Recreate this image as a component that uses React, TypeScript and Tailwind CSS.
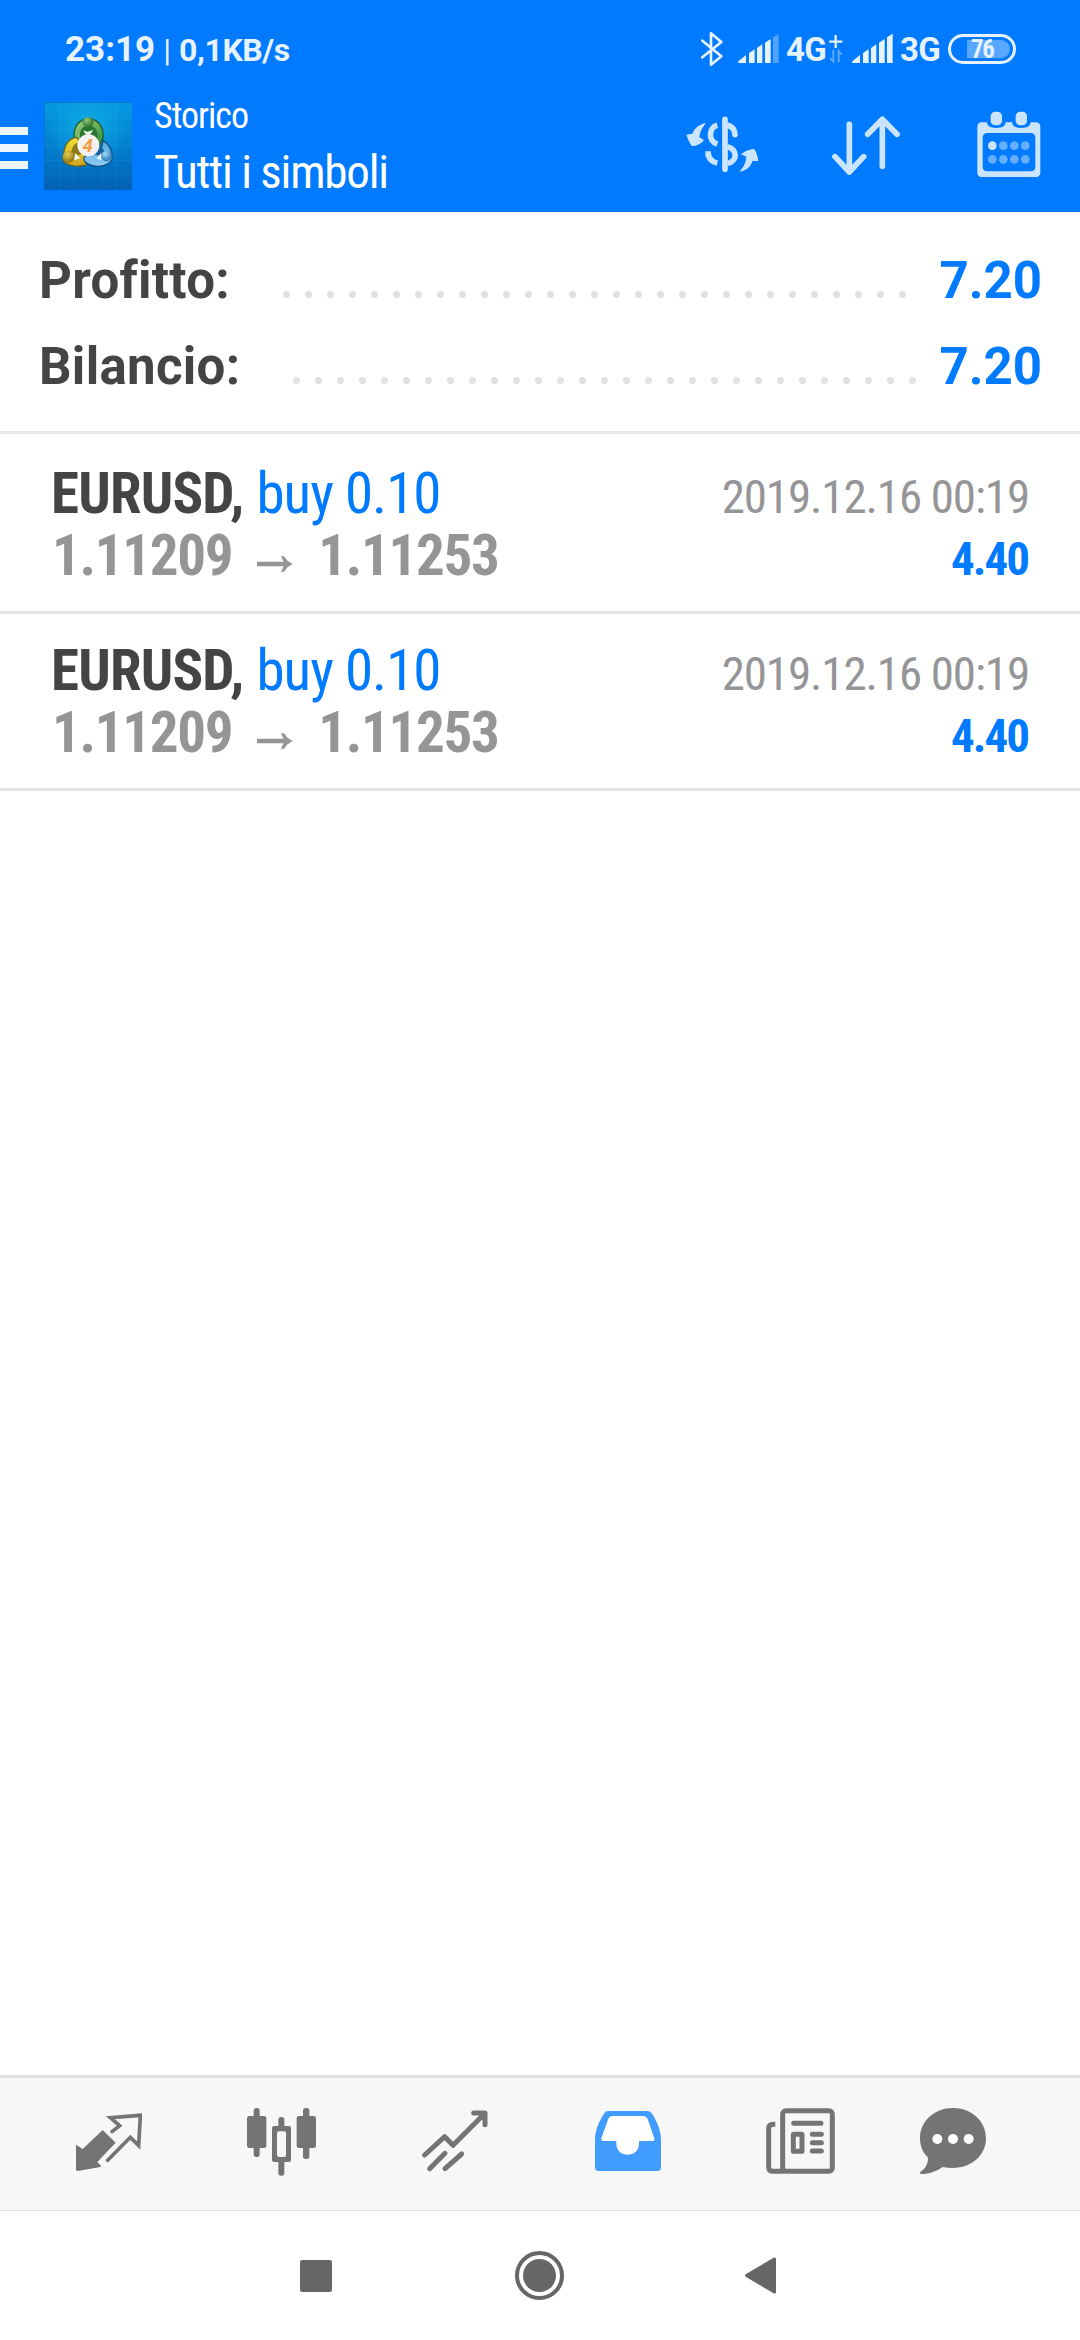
type Deal = {
  symbol: string;
  side: string;
  open: string;
  close: string;
  time: string;
  profit: string;
};

const deals: Deal[] = [
  { symbol: "EURUSD,", side: "buy 0.10", open: "1.11209", close: "1.11253", time: "2019.12.16 00:19", profit: "4.40" },
  { symbol: "EURUSD,", side: "buy 0.10", open: "1.11209", close: "1.11253", time: "2019.12.16 00:19", profit: "4.40" },
];

const totals = [
  { label: "Profitto:", value: "7.20" },
  { label: "Bilancio:", value: "7.20" },
];

function Signal({ weak }: { weak?: boolean }) {
  return (
    <svg className="h-[100px] w-[41px]" viewBox="233 0 123 300" fill="#e6f2ff">
      <path d="M234 189V184L257 165V189Z" />
      <path d="M266 189V159L283 148V189Z" />
      <path d="M290 189V144L306 133V189Z" />
      <path d="M314 189V128L331 117V189Z" />
      <path d="M338 189V112L355 101V189Z" opacity={weak ? 0.35 : 1} />
    </svg>
  );
}

function StatusBar() {
  return (
    <div className="flex h-[100px] items-center pr-16 pl-[65px] text-[#e6f2ff]">
      <div className="flex items-baseline font-bold">
        <span className="text-[35px] leading-[40px]">23:19</span>
        <span className="ml-[8px] text-[32px] leading-[40px] font-normal">|</span>
        <span className="ml-[8px] text-[32px] leading-[40px] tracking-[-0.4px]">0,1KB/s</span>
      </div>
      <div className="ml-auto flex items-center">
        <svg className="h-[100px] w-[22px]" viewBox="122 0 66 300" fill="none" stroke="#e6f2ff" strokeWidth="8" strokeLinejoin="round" strokeLinecap="round">
          <path d="M126 122L183 169L152 194V100L183 126L126 172" />
        </svg>
        <div className="ml-[15px]">
          <Signal weak />
        </div>
        <span className="ml-[7px] w-[43px] text-[33px] leading-[96px] font-bold tracking-[-0.8px]">4G</span>
        <svg className="h-[100px] w-[14px]" viewBox="507 0 42 300" fill="none" stroke="#e6f2ff">
          <path d="M508 125H547M527 105V144" strokeWidth="7" />
          <path d="M520 149V184L510 174M536 187V153L545 164" strokeWidth="6" opacity=".4" />
        </svg>
        <div className="ml-[9px]">
          <Signal />
        </div>
        <span className="ml-[7px] w-[48px] text-[33px] leading-[96px] font-bold tracking-[-0.8px]">3G</span>
        <div className="relative mb-[2px] h-[30px] w-[68px] rounded-full border-[3px] border-[#e6f2ff]">
          <div className="absolute top-[3px] right-[3px] h-[18px] w-[43px] rounded-r-full bg-white/35" />
          <span className="absolute top-px left-[20px] font-['Roboto_Condensed',sans-serif] text-[25px] leading-[24px] font-bold tracking-[-1.5px]">76</span>
        </div>
      </div>
    </div>
  );
}

function Logo() {
  return (
    <svg className="mt-[2px] ml-4 size-[88px]" viewBox="42 37 264 264">
      <defs>
        <linearGradient id="sky" x1="0" y1="0" x2="0" y2="1">
          <stop offset="0" stopColor="#0599e2" />
          <stop offset=".5" stopColor="#027fd0" />
          <stop offset="1" stopColor="#0161b2" />
        </linearGradient>
        <radialGradient id="glow" cx=".5" cy=".3" r=".45">
          <stop offset="0" stopColor="#12b5e6" stopOpacity=".75" />
          <stop offset="1" stopColor="#12b5e6" stopOpacity="0" />
        </radialGradient>
        <linearGradient id="green" x1="0" y1="0" x2="1" y2="1">
          <stop offset="0" stopColor="#a3d080" />
          <stop offset="1" stopColor="#2f8b34" />
        </linearGradient>
        <linearGradient id="yellow" x1="0" y1="0" x2="0" y2="1">
          <stop offset="0" stopColor="#f3df35" />
          <stop offset="1" stopColor="#cfa420" />
        </linearGradient>
        <linearGradient id="blue" x1="0" y1="0" x2="0" y2="1">
          <stop offset="0" stopColor="#4fa6de" />
          <stop offset="1" stopColor="#8dcbf0" />
        </linearGradient>
        <radialGradient id="ballGreen" cx=".4" cy=".3" r=".7">
          <stop offset="0" stopColor="#8fc978" />
          <stop offset="1" stopColor="#286b2a" />
        </radialGradient>
        <radialGradient id="ballYellow" cx=".4" cy=".3" r=".7">
          <stop offset="0" stopColor="#e6cf4a" />
          <stop offset="1" stopColor="#927316" />
        </radialGradient>
        <radialGradient id="ballBlue" cx=".4" cy=".3" r=".7">
          <stop offset="0" stopColor="#a4dcf6" />
          <stop offset="1" stopColor="#2279b4" />
        </radialGradient>
      </defs>
      <rect x="42" y="37" width="264" height="264" fill="url(#sky)" />
      <rect x="42" y="37" width="264" height="264" fill="url(#glow)" />
      <path d="M90 37V301M132 37V301M174 37V301M216 37V301M258 37V301M42 80H306M42 124H306M42 168H306M42 212H306M42 256H306" stroke="#4fc0ee" strokeOpacity=".2" strokeWidth="2" />
      <path d="M43 37V301M42 38H306" stroke="#0562b4" strokeWidth="2" />
      <path d="M133 150C128 112 146 88 176 88C206 88 222 112 219 146L206 172L148 160Z" fill="url(#green)" stroke="#1d5d2d" strokeWidth="4" />
      <path d="M140 143C112 146 100 170 99 212C112 228 138 234 168 226L178 196Z" fill="url(#yellow)" stroke="#6c6320" strokeWidth="4" />
      <path d="M219 152C240 164 248 184 246 210C232 232 196 238 166 218C158 208 162 198 172 196L212 186Z" fill="url(#blue)" stroke="#104f86" strokeWidth="4" />
      <path d="M150 146C148 118 158 108 176 108C194 108 206 120 203 148Z" fill="#2a7434" />
      <path d="M122 206C122 180 130 162 146 158L156 192Z" fill="#8a7a1c" />
      <path d="M226 204C226 186 220 176 210 170L192 194Z" fill="#1c64a0" />
      <path d="M159 122L173 126L190 121L180 135H168Z" fill="#eaf6df" />
      <path d="M136 190L150 206L131 212ZM214 190L199 206L214 212Z" fill="#eef8ff" />
      <circle cx="174" cy="98" r="16" fill="url(#ballGreen)" />
      <circle cx="116" cy="201" r="18" fill="url(#ballYellow)" />
      <circle cx="229" cy="199" r="16" fill="url(#ballBlue)" />
      <circle cx="175" cy="167" r="33" fill="#f5f1f3" />
      <text x="173" y="187" textAnchor="middle" fontFamily="Roboto, sans-serif" fontStyle="italic" fontWeight="700" fontSize="56" fill="#f0a046">4</text>
    </svg>
  );
}

function Toolbar() {
  return (
    <div className="flex h-28 items-start pr-[39px]">
      <div className="mt-[27px] flex w-7 flex-col gap-[9px]">
        <div className="h-2 bg-[#ebf6ff]" />
        <div className="h-2 bg-[#ebf6ff]" />
        <div className="h-2 bg-[#ebf6ff]" />
      </div>
      <Logo />
      <div className="ml-[22px] flex flex-col font-['Roboto_Condensed',sans-serif] text-white">
        <span className="text-[36px] leading-[32px] tracking-[-1px]">Storico</span>
        <span className="text-[47px] leading-[80px] tracking-[-1.2px]">Tutti i simboli</span>
      </div>
      <div className="ml-auto flex text-[#cce5ff]">
        <svg className="h-28 w-[73px]" viewBox="77 300 219 336" fill="currentColor">
          <path d="M137 369C116 373 103 384 96 401L78 404C82 416 88 429 94 438C107 438 122 433 131 420L117 412C118 396 125 383 137 369Z" />
          <path d="M237 515C258 511 269 503 277 482L294 484C293 469 288 456 281 446C268 449 253 452 242 463L258 470C257 488 250 501 237 515Z" />
          <g fill="none" stroke="currentColor" strokeWidth="17">
            <path d="M194 358V508" strokeLinecap="round" />
            <path d="M171 376C145 382 142 423 171 432" />
            <path d="M135 462H144C146 478 155 486 171 489" />
            <path d="M202 376C217 380 223 389 224 404" strokeLinecap="round" />
            <path d="M202 440C232 448 232 483 202 490" />
          </g>
        </svg>
        <svg className="ml-[73px] h-28 w-[68px]" viewBox="514 300 204 336" fill="none" stroke="currentColor" strokeWidth="17" strokeLinecap="round" strokeLinejoin="round">
          <path d="M566 373V516M523 470L566 516L609 470" />
          <path d="M665 499V358M621 403L665 358L709 403" />
        </svg>
        <svg className="ml-[77px] h-28 w-[64px]" viewBox="950 300 192 336" fill="currentColor">
          <path fillRule="evenodd" d="M963 367H980C981 379 990 384 1008 384C1026 384 1035 379 1036 367H1055C1056 379 1065 384 1083 384C1101 384 1110 379 1111 367H1128C1135 367 1140 372 1140 379V519C1140 526 1135 531 1128 531H963C956 531 951 526 951 519V379C951 372 956 367 963 367ZM981 399C972 399 967 404 967 413V500C967 509 972 514 981 514H1111C1120 514 1125 509 1125 500V413C1125 404 1120 399 1111 399Z" />
          <rect x="991" y="335" width="34" height="41" rx="14" />
          <rect x="1066" y="335" width="34" height="41" rx="14" />
          <circle cx="996" cy="437" r="13" />
          <g opacity=".5">
            <circle cx="1029" cy="437" r="13" />
            <circle cx="1062" cy="437" r="13" />
            <circle cx="1095" cy="437" r="13" />
            <circle cx="996" cy="478" r="13" />
            <circle cx="1029" cy="478" r="13" />
            <circle cx="1062" cy="478" r="13" />
            <circle cx="1095" cy="478" r="13" />
          </g>
        </svg>
      </div>
    </div>
  );
}

function Summary() {
  return (
    <section className="mb-[3px] border-b-[3px] border-[#e5e5e5] pt-[26px] pr-[38px] pb-[21px] pl-[39px] text-[51px] leading-[86px] font-bold">
      {totals.map((row) => (
        <div key={row.label} className="flex">
          <span className="tracking-[0.3px] text-[#444444]">{row.label}</span>
          <div className="mt-[53px] ml-[53px] flex gap-[15px]">
            {Array.from({ length: 29 }, (_, i) => (
              <span key={i} className="size-[7px] rounded-full bg-[#e1e1e1]" />
            ))}
          </div>
          <span className="ml-auto text-[#007aff]">{row.value}</span>
        </div>
      ))}
    </section>
  );
}

function DealRow({ deal }: { deal: Deal }) {
  return (
    <li className="flex h-[177px] justify-between border-b-[3px] border-[#e5e5e5] pr-[51px] pl-[51px] font-['Roboto_Condensed',sans-serif] leading-[62px]">
      <div className="pt-[26px] text-[57px]">
        <div className="flex">
          <span className="font-bold tracking-[-0.8px] text-[#444444]">{deal.symbol}</span>
          <span className="ml-[13px] tracking-[-1px] text-[#007aff]">{deal.side}</span>
        </div>
        <div className="flex pl-px font-bold tracking-[-1.3px] text-[#959598]">
          <span>{deal.open}</span>
          <svg className="ml-[25px] h-[62px] w-[37px]" viewBox="0 0 37 62" fill="none" stroke="currentColor" strokeWidth="4.500">
            <path d="M0 39H33" />
            <path d="M24 31L27.500 31.500C30 36 32 37.500 36.500 39C32 40.500 30 42 27.500 46.500L24 47L27.500 39Z" fill="currentColor" stroke="none" />
          </svg>
          <span className="ml-[24px]">{deal.close}</span>
        </div>
      </div>
      <div className="flex flex-col items-end pt-[29px] text-[47px]">
        <span className="tracking-[-1.1px] text-[#959598]">{deal.time}</span>
        <span className="mr-px font-bold tracking-[-2px] text-[#007aff]">{deal.profit}</span>
      </div>
    </li>
  );
}

function TabBar() {
  return (
    <nav className="flex h-[136px] border-t-[3px] border-b border-[#e0e0e0] bg-[#f7f7f7] pl-[22px] text-[#747474]">
      <div className="flex w-[173px] justify-center">
        <svg className="h-[132px] w-[66px]" viewBox="47 -51 198 396" fill="currentColor">
          <path d="M127 105L166 143L111 201L123 214L116 217L52 228Q47 228 47 223V149L67 162Z" />
          <path d="M155 110L178 92L150 68L240 61L235 152L210 127L142 196" fill="none" stroke="currentColor" strokeWidth="11" strokeLinecap="round" />
        </svg>
      </div>
      <div className="flex w-[173px] justify-center">
        <svg className="h-[132px] w-[69px]" viewBox="560 -51 207 396" fill="currentColor">
          <rect x="560" y="63" width="58" height="96" rx="7" />
          <rect x="580" y="39" width="18" height="147" rx="8" />
          <rect x="709" y="63" width="58" height="96" rx="7" />
          <rect x="728" y="39" width="19" height="153" rx="8" />
          <rect x="654" y="66" width="18" height="40" rx="8" />
          <rect x="654" y="190" width="18" height="52" rx="8" />
          <path fillRule="evenodd" d="M641 93H686Q692 93 692 99V195Q692 201 686 201H641Q635 201 635 195V99Q635 93 641 93ZM656 109Q650 109 650 115V180Q650 186 656 186H671Q677 186 677 180V115Q677 109 671 109Z" />
        </svg>
      </div>
      <div className="flex w-[173px] justify-center">
        <svg className="h-[132px] w-[66px]" viewBox="1084 -51 198 396" fill="none" stroke="currentColor" strokeWidth="15" strokeLinecap="round" strokeLinejoin="round">
          <path d="M1092 180L1152 125L1177 151L1273 55M1239 54H1273V89" />
          <path d="M1107 221L1153 175M1153 221L1203 177" />
        </svg>
      </div>
      <div className="flex w-[173px] justify-center">
        <svg className="h-[132px] w-[66px]" viewBox="74 -51 198 396" fill="#409cff">
          <path d="M113 48H231Q239 48 244 55C262 82 272 108 272 136V217Q272 228 261 228H85Q74 228 74 217V136C74 108 84 82 102 55Q106 48 113 48Z" />
          <path d="M125 63Q117 64 114 71L93 130Q92 138 100 138H138V146C138 190 206 190 206 146V138H247Q254 138 252 130L232 72Q229 64 220 63Z" fill="#fff" />
        </svg>
      </div>
      <div className="flex w-[173px] justify-center">
        <svg className="h-[132px] w-[69px]" viewBox="590 -51 207 396" fill="none" stroke="currentColor" strokeWidth="15">
          <rect x="640" y="47" width="149" height="182" rx="10" />
          <path d="M618 88H612Q598 88 598 102V216Q598 229 611 229H645" />
          <path d="M673 85H755M729 118H756M729 143H756M729 168H756" strokeLinecap="round" />
          <rect x="672" y="118" width="26" height="51" rx="2" />
        </svg>
      </div>
      <div className="flex w-[132px] justify-center">
        <svg className="h-[132px] w-[66px]" viewBox="1050 -51 198 396" fill="currentColor">
          <path d="M1149 39C1204 39 1248 78 1248 130C1248 181 1204 219 1149 219C1139 219 1128 218 1118 216C1100 229 1078 237 1054 237Q1049 237 1051 230C1066 221 1074 207 1074 188C1058 173 1050 152 1050 130C1050 78 1094 39 1149 39Z" />
          <circle cx="1102" cy="132" r="15" fill="#fff" />
          <circle cx="1149" cy="132" r="15" fill="#fff" />
          <circle cx="1196" cy="132" r="15" fill="#fff" />
        </svg>
      </div>
    </nav>
  );
}

function SystemNav() {
  return (
    <div className="flex h-[129px] items-center justify-center bg-white pr-1 text-[#666666]">
      <div className="size-8 rounded-[2px] bg-[#666666]" />
      <div className="ml-[183px] flex size-[49px] items-center justify-center rounded-full border-4 border-[#666666]">
        <div className="size-[33px] rounded-full bg-[#666666]" />
      </div>
      <svg className="ml-[181px] h-[37px] w-[31px]" viewBox="0 0 31 37" fill="currentColor">
        <path d="M29 .5Q31 0 31 2V35Q31 37 29 36.500L1 20Q-1 18.500 1 17Z" />
      </svg>
    </div>
  );
}

export default function App() {
  return (
    <div className="flex h-[2340px] w-[1080px] flex-col overflow-hidden bg-white font-['Roboto',sans-serif]">
      <header className="bg-[#007aff]">
        <StatusBar />
        <Toolbar />
      </header>
      <main className="flex-1">
        <Summary />
        <ul>
          {deals.map((deal, i) => (
            <DealRow key={i} deal={deal} />
          ))}
        </ul>
      </main>
      <TabBar />
      <SystemNav />
    </div>
  );
}
